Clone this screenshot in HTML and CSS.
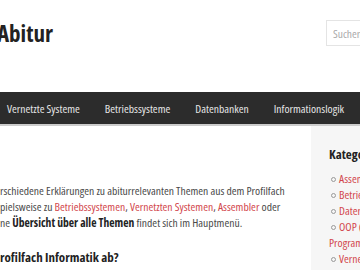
FILE: index.html
```html
<!DOCTYPE html>
<html lang="de">
<head>
    <meta charset="UTF-8">
    <title>Abitur</title>
    <link rel="stylesheet" href="styles.css">
</head>
<body>

<div class="site">

    <header class="header">
        <div class="title">Abitur</div>
        <input class="search" type="text" placeholder="Suchen">
    </header>

    <nav class="nav">
        <a href="#">Vernetzte Systeme</a>
        <a href="#">Betriebssysteme</a>
        <a href="#">Datenbanken</a>
        <a href="#">Informationslogik</a>
    </nav>

    <div class="content">
        <main class="main">
            <p class="intro">
                rschiedene Erklärungen zu abiturrelevanten Themen aus dem Profilfach<br>
                pielsweise zu <a href="#">Betriebssystemen</a>, <a href="#">Vernetzten Systemen</a>, <a href="#">Assembler</a> oder<br>
                ne <b>Übersicht über alle Themen</b> findet sich im Hauptmenü.
            </p>
            <h2>rofilfach Informatik ab?</h2>
        </main>

        <aside class="sidebar">
            <h3>Kategorien</h3>
            <ul>
                <li><a href="#">Assembler</a></li>
                <li><a href="#">Betriebssysteme</a></li>
                <li><a href="#">Datenbanken</a></li>
                <li><a href="#">OOP (Objektorientierte Programmierung)</a></li>
                <li><a href="#">Vernetzte Systeme</a></li>
            </ul>
        </aside>
    </div>

</div>

</body>
</html>
```

FILE: styles.css
```css
html, body {
    margin: 0;
    overflow: hidden;
}

body {
    font-family: "Open Sans", sans-serif;
    font-stretch: 75%;
    font-size: 11.6px;
    color: #4a4a4a;
    background: #fff;
}

.site {
    width: 466px;
}

a {
    color: #d2474d;
    text-decoration: none;
}

.header {
    height: 72px;
    padding-top: 20px;
    display: flex;
    align-items: flex-start;
    justify-content: space-between;
}

.title {
    margin-left: -3px;
    font-size: 23px;
    line-height: 26px;
    font-weight: bold;
    color: #222;
}

.search {
    width: 140px;
    height: 26px;
    box-sizing: border-box;
    padding: 0 6px;
    border: 1px solid #e4e4e4;
    font-family: inherit;
    font-stretch: 75%;
    font-size: 11.5px;
    color: #999;
}

.search::placeholder {
    color: #aaa;
}

.nav {
    display: flex;
    height: 32px;
    align-items: center;
    padding-left: 7px;
    gap: 25px;
    background: #2c2c2c;
    border-bottom: 2px solid #ccc;
}

.nav a {
    color: #e6e6e6;
    white-space: nowrap;
}

.content {
    display: grid;
    grid-template-columns: 311px 1fr;
}

.main {
    padding-top: 57px;
}

.intro {
    margin: 0;
    line-height: 16px;
    white-space: nowrap;
}

.intro b {
    color: #222;
}

.main h2 {
    margin: 17px 0 0;
    font-size: 13px;
    line-height: 18px;
    color: #222;
    white-space: nowrap;
}

.sidebar {
    background: #f6f6f6;
    padding: 20px 18px 0;
    min-height: 150px;
}

.sidebar h3 {
    margin: 0 0 9px;
    font-size: 13px;
    line-height: 16px;
    color: #222;
}

.sidebar ul {
    margin: 0;
    padding: 0;
    list-style: none;
    line-height: 16px;
}

.sidebar li::before {
    content: "";
    display: inline-block;
    width: 3px;
    height: 3px;
    margin: 0 3px 1px 2px;
    border: 1px solid #999;
    border-radius: 50%;
}
```
